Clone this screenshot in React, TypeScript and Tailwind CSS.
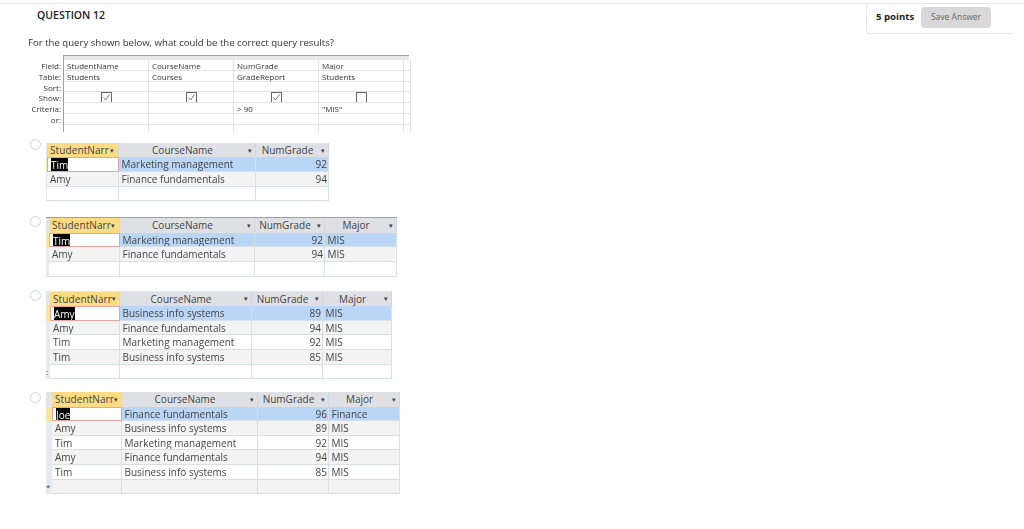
import React from 'react';

type Table = {
    gap: string;
    radio: string;
    cols: string;
    topLine: string;
    marker: string;
    headers: string[];
    selected: string;
    rows: string[][];
};

const Caret = () => <span className="text-[7px] leading-none text-gray-700 shrink-0">▾</span>;

const ResultTable: React.FC<{ table: Table }> = ({ table }) => (
    <div className={`relative ml-[46px] w-fit ${table.gap}`}>
        <div className={`absolute ${table.radio} left-[-16px] w-[11px] h-[11px] rounded-full border border-gray-300 bg-white`}></div>
        <div className={`grid ${table.cols} ${table.topLine} w-fit text-[10px] leading-[14.6px] text-[#444]`}>
            <div className="h-[14.6px] bg-[#e3e4e6]"></div>
            {table.headers.map((h, i) => (
                <div
                    key={h}
                    className={`h-[14.6px] pl-[3px] flex items-center border-r border-gray-300 whitespace-nowrap ${i === 0 ? 'pr-[4px] bg-[#fbdc84]' : 'pr-[3px] bg-[#dfe0e3]'}`}
                >
                    <span className={i === 0 ? 'flex-1 tracking-[0.1px]' : 'flex-1 text-center pr-[5px]'}>{h}</span>
                    <Caret />
                </div>
            ))}
            {table.rows.map((row, r) => (
                <React.Fragment key={r}>
                    <div className={`h-[14.6px] text-[8px] leading-[14px] ${r === 0 ? 'bg-[#fbe3a0]' : 'bg-[#e6e9ee]'}`}>
                        {r === table.rows.length - 1 ? table.marker : ''}
                    </div>
                    {row.map((cell, c) => (
                        <div
                            key={c}
                            className={`h-[14.6px] px-[2.5px] border-b border-r border-[#d9dfe6] whitespace-nowrap overflow-hidden ${c === 2 ? 'text-right pr-[1px]' : ''} ${r === 0 && c > 0 ? 'bg-[#b9d6f6]' : r % 2 === 1 ? 'bg-[#f3f3f3]' : 'bg-white'} ${r === 0 && c === 0 ? 'border border-[#e4a5a5]' : ''} ${c === 0 ? 'pl-[3px]' : ''}`}
                        >
                            {r === 0 && c === 0 ? <span className="bg-black text-white">{table.selected}</span> : cell}
                        </div>
                    ))}
                </React.Fragment>
            ))}
        </div>
    </div>
);

const tables: Table[] = [
    {
        gap: 'mt-[11px]',
        radio: 'top-[-4px]',
        cols: 'grid-cols-[1px_72px_137px_73px]',
        topLine: '',
        marker: '',
        headers: ['StudentNarr', 'CourseName', 'NumGrade'],
        selected: 'Tim',
        rows: [
            ['Tim', 'Marketing management', '92'],
            ['Amy', 'Finance fundamentals', '94'],
            ['', '', ''],
        ],
    },
    {
        gap: 'mt-[16px]',
        radio: 'top-[-1px]',
        cols: 'grid-cols-[3px_71px_135px_70px_72px]',
        topLine: 'border-t border-gray-400',
        marker: '',
        headers: ['StudentNarr', 'CourseName', 'NumGrade', 'Major'],
        selected: 'Tim',
        rows: [
            ['Tim', 'Marketing management', '92', 'MIS'],
            ['Amy', 'Finance fundamentals', '94', 'MIS'],
            ['', '', '', ''],
        ],
    },
    {
        gap: 'mt-[14px]',
        radio: 'top-[-1px]',
        cols: 'grid-cols-[4px_70px_132px_71px_69px]',
        topLine: 'border-t border-gray-200',
        marker: ':',
        headers: ['StudentNarr', 'CourseName', 'NumGrade', 'Major'],
        selected: 'Amy',
        rows: [
            ['Amy', 'Business info systems', '89', 'MIS'],
            ['Amy', 'Finance fundamentals', '94', 'MIS'],
            ['Tim', 'Marketing management', '92', 'MIS'],
            ['Tim', 'Business info systems', '85', 'MIS'],
            ['', '', '', ''],
        ],
    },
    {
        gap: 'mt-[13px]',
        radio: 'top-0',
        cols: 'grid-cols-[6px_70px_136px_71px_71px]',
        topLine: '',
        marker: '*',
        headers: ['StudentNarr', 'CourseName', 'NumGrade', 'Major'],
        selected: 'Joe',
        rows: [
            ['Joe', 'Finance fundamentals', '96', 'Finance'],
            ['Amy', 'Business info systems', '89', 'MIS'],
            ['Tim', 'Marketing management', '92', 'MIS'],
            ['Amy', 'Finance fundamentals', '94', 'MIS'],
            ['Tim', 'Business info systems', '85', 'MIS'],
            ['', '', '', ''],
        ],
    },
];

const CheckBox: React.FC<{ checked: boolean }> = ({ checked }) => (
    <svg width="11" height="11" viewBox="0 0 11 11" className="mx-auto">
        <rect x="0.5" y="0.5" width="10" height="10" fill="white" stroke="#666" />
        {checked && <path d="M2.5 5.5 L4.5 8 L8.5 2.5" fill="none" stroke="#777" strokeWidth="1" />}
    </svg>
);

const gridLabels = ['Field:', 'Table:', 'Sort:', 'Show:', 'Criteria:', 'or:'];
const gridRows: string[][] = [
    ['StudentName', 'CourseName', 'NumGrade', 'Major', ''],
    ['Students', 'Courses', 'GradeReport', 'Students', ''],
    ['', '', '', '', ''],
    ['', '', '', '', ''],
    ['', '', '> 90', '"MIS"', ''],
    ['', '', '', '', ''],
    ['', '', '', '', ''],
];

const QueryGrid = () => (
    <div className="mt-[5px] flex text-[8px] leading-[11px] text-[#333]">
        <div className="w-[63px] pt-[5px] pr-[2px] text-right font-medium shrink-0">
            {gridLabels.map(l => (
                <div key={l} className="h-[10.8px]">{l}</div>
            ))}
        </div>
        <div className="w-[346px] border-l border-t border-gray-400">
            <div className="h-[4px] bg-[#e8e8e8]"></div>
            {gridRows.map((row, r) => (
                <div key={r} className={`grid grid-cols-[85px_85px_85px_85px_5px] ${r === 6 ? 'h-[7px]' : 'h-[10.8px]'}`}>
                    {row.map((cell, c) => (
                        <div key={c} className={`px-[3px] border-r border-b border-[#e2e2e2] overflow-hidden whitespace-nowrap ${r === 6 ? 'border-b-0' : ''}`}>
                            {r === 3 && c < 4 ? <CheckBox checked={c < 3} /> : cell}
                        </div>
                    ))}
                </div>
            ))}
        </div>
    </div>
);

export default function App() {
    return (
        <div className="w-[1024px] h-[529px] bg-white overflow-hidden pt-[3px] font-['Open_Sans',sans-serif]">
            {/* Question header */}
            <div className="flex justify-between border-t border-[#e6e6e6] pl-[37px] pr-[11px]">
                <h2 className="pt-[4px] text-[10.5px] leading-[15px] font-semibold text-[#222]">QUESTION 12</h2>
                <div className="w-[147px] h-[30px] pl-[9px] pr-[22px] pb-[2px] flex items-center justify-between border-l border-b border-[#e6e6e6] rounded-bl-sm">
                    <span className="text-[9.6px] font-bold text-[#222]">5 points</span>
                    <button className="w-[70px] h-[21px] bg-[#d8d8d8] text-[8.5px] text-[#666] rounded-sm">Save Answer</button>
                </div>
            </div>
            {/* Question body */}
            <div className="blur-[0.4px]">
                <p className="mt-[2px] ml-[28px] text-[9.6px] leading-[14px] text-[#333]">For the query shown below, what could be the correct query results?</p>
                <QueryGrid />
                {tables.map(t => (
                    <ResultTable key={t.selected + t.rows.length} table={t} />
                ))}
            </div>
        </div>
    );
}
